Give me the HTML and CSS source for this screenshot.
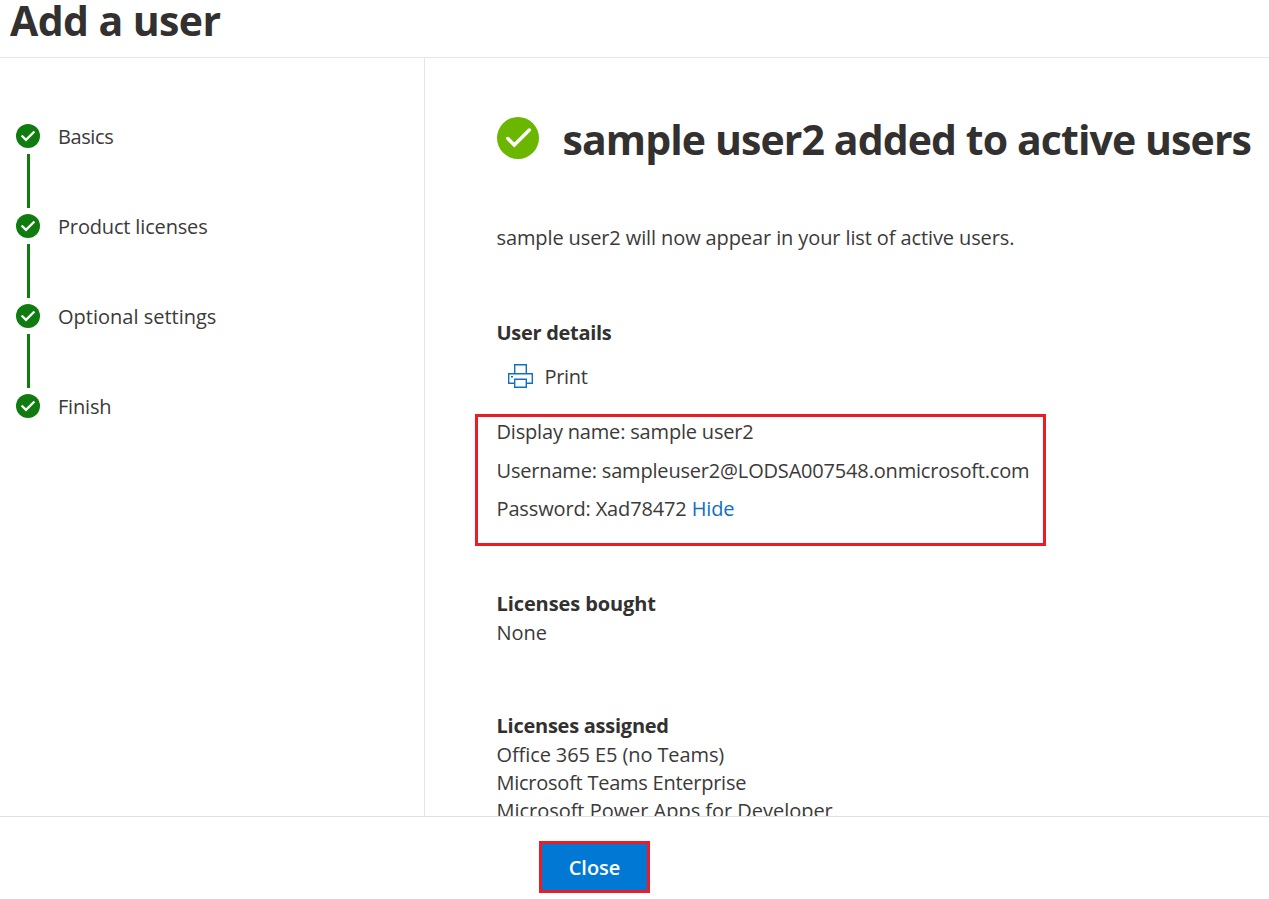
FILE: index.html
```html
<!DOCTYPE html>
<html lang="en">
<head>
<meta charset="utf-8">
<title>Add a user</title>
<link rel="stylesheet" href="styles.css">
</head>
<body>
<svg class="defs" aria-hidden="true">
  <symbol id="check" viewBox="0 0 42 42"><circle cx="21" cy="21" r="21" fill="currentColor"/><path d="M10.800 21.500l6.500 6.500L32.300 13" fill="none" stroke="#fff" stroke-width="3.500" stroke-linecap="round"/></symbol>
  <symbol id="step-check" viewBox="0 0 24 24"><circle cx="12" cy="12" r="12" fill="currentColor"/><path d="M5.600 11.500l4.400 4.400L18.400 7.500" fill="none" stroke="#fff" stroke-width="2.300"/></symbol>
</svg>
<header class="header"><h1 class="header-title">Add a user</h1></header>
<div class="body">
  <nav class="steps">
    <div class="step"><svg class="step-icon"><use href="#step-check"/></svg><span class="step-label t-basics">Basics</span></div>
    <div class="line"></div>
    <div class="step"><svg class="step-icon"><use href="#step-check"/></svg><span class="step-label t-product">Product licenses</span></div>
    <div class="line"></div>
    <div class="step"><svg class="step-icon"><use href="#step-check"/></svg><span class="step-label t-optional">Optional settings</span></div>
    <div class="line"></div>
    <div class="step"><svg class="step-icon"><use href="#step-check"/></svg><span class="step-label t-finish">Finish</span></div>
  </nav>
  <main class="main">
    <div class="result"><svg class="result-icon"><use href="#check"/></svg><h2 class="result-title">sample user2 added to active users</h2></div>
    <p class="text intro">sample user2 will now appear in your list of active users.</p>
    <h3 class="subhead t-details">User details</h3>
    <div class="print">
      <svg class="print-icon" viewBox="0 0 25 24"><path d="M6.700 10V.7h11.600V10M6.500 19.300H.7V9.700h23.600v9.600h-5.800M6.700 15.200h11.600v8.100H6.700z" fill="none" stroke="#0f70c4" stroke-width="1.400"/><path d="M3 12h2v1.500H3z" fill="#0f70c4"/></svg>
      <span class="text t-print">Print</span>
    </div>
    <section class="details">
      <div class="text t-display">Display name: sample user2</div>
      <div class="text t-username">Username: sampleuser2@LODSA007548.onmicrosoft.com</div>
      <div class="text t-password">Password: Xad78472 <a class="link">Hide</a></div>
    </section>
    <h3 class="subhead t-bought">Licenses bought</h3>
    <div class="text t-none">None</div>
    <h3 class="subhead t-assigned">Licenses assigned</h3>
    <div class="text t-office">Office 365 E5 (no Teams)</div>
    <div class="text t-teams">Microsoft Teams Enterprise</div>
    <div class="text t-power">Microsoft Power Apps for Developer</div>
  </main>
</div>
<footer class="footer"><button class="close">Close</button></footer>
</body>
</html>
```

FILE: styles.css
```css
* { box-sizing: border-box; margin: 0; }
body { height: 899px; display: flex; flex-direction: column; overflow: hidden; background: #fff; color: #3b3a39; font: 20px/28px "Open Sans", "Noto Sans", sans-serif; white-space: nowrap; }
.defs { display: none; }
.header { flex: 0 0 58px; padding: 0 0 0 10px; border-bottom: 1px solid #e5e5e5; }
.header-title { font-size: 41px; line-height: 40px; font-weight: 700; color: #323130; letter-spacing: -0.6px; }
.body { flex: 0 0 758px; display: flex; overflow: hidden; }
.steps { flex: 0 0 425px; border-right: 1px solid #e5e5e5; padding: 66px 0 0 16px; }
.step { height: 24px; display: flex; align-items: center; gap: 18px; }
.step-label { padding-top: 2px; }
.step-icon { width: 24px; height: 24px; color: #107c10; }
.line { width: 3px; height: 54px; margin: 6px 0 6px 11px; background: #107c10; }
.main { flex: 1; min-width: 0; padding: 59px 0 0 71.5px; }
.result { display: flex; height: 42px; align-items: center; gap: 24px; }
.result-icon { width: 42px; height: 42px; color: #6bb700; flex: none; }
.result-title { font-size: 41px; line-height: 42px; padding-top: 2px; font-weight: 700; color: #323130; letter-spacing: -0.9px; }
.intro { margin-top: 65px; letter-spacing: -0.11px; }
.subhead { font-size: 20px; font-weight: 700; color: #323130; }
.t-details { margin-top: 67px; letter-spacing: -0.3px; }
.print { display: flex; align-items: center; gap: 12px; margin: 15px 0 0 11px; height: 28px; }
.t-print { padding-top: 2px; letter-spacing: -0.3px; }
.print-icon { width: 25px; height: 24px; }
.details { width: 571px; height: 132px; margin: 24px 0 44px -21.5px; padding: 1px 0 0 18.5px; border: 3px solid #ed1c24; display: flex; flex-direction: column; gap: 10.5px; letter-spacing: -0.18px; }
.t-password { letter-spacing: -0.14px; }
.link { color: #0f70c4; }
.t-bought, .t-assigned { margin-bottom: 1px; }
.t-bought { letter-spacing: -0.1px; }
.t-assigned { margin-top: 65px; letter-spacing: -0.25px; }
.t-basics { letter-spacing: -0.4px; }
.t-product { letter-spacing: -0.16px; }
.t-finish { letter-spacing: -0.2px; }
.t-office { letter-spacing: -0.1px; }
.t-teams { letter-spacing: -0.25px; }
.t-power { letter-spacing: -0.03px; }
.footer { flex: 1; border-top: 1px solid #e1e1e1; padding: 24px 0 0 539px; }
.close { display: block; width: 111px; height: 52px; border: 3px solid #ed1c24; background: #0078d4; color: #fff; font: 600 20px/44px "Open Sans", "Noto Sans", sans-serif; padding: 2px 0 0; }
```
